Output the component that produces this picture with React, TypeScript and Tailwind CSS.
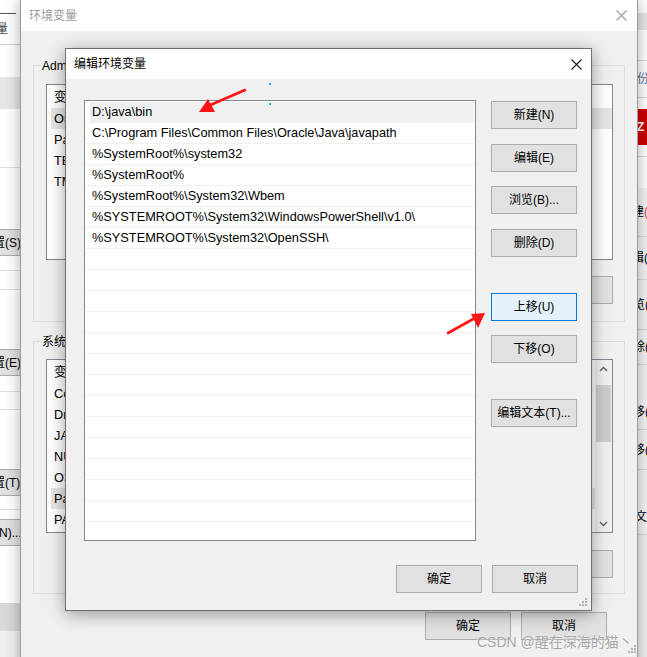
import React from "react";

const FONT = "font-['Liberation_Sans','Noto_Sans_CJK_SC',sans-serif]";

function XIcon({ color }: { color: string }) {
  return (
    <svg width="11" height="11" viewBox="0 0 11 11" className="shrink-0">
      <path d="M0.5 0.5 L10.5 10.5 M10.5 0.5 L0.5 10.5" stroke={color} strokeWidth="1.1" fill="none" />
    </svg>
  );
}

function Btn({ children, focus = false, className = "" }: { children: React.ReactNode; focus?: boolean; className?: string }) {
  return (
    <div
      className={`flex items-center justify-center h-[28px] w-[86px] shrink-0 text-[12px] text-black whitespace-nowrap border ${
        focus ? "bg-[#e5f1fb] border-[#0078d7]" : "bg-[#e1e1e1] border-[#adadad]"
      } ${className}`}
    >
      {children}
    </div>
  );
}

function Grip() {
  return (
    <svg width="10" height="10" viewBox="0 0 10 10" className="absolute right-[3px] bottom-[3px]">
      {[
        [7, 1],
        [4, 4],
        [7, 4],
        [1, 7],
        [4, 7],
        [7, 7],
      ].map(([x, y], i) => (
        <rect key={i} x={x} y={y} width="2" height="2" fill="#b4b4b4" />
      ))}
    </svg>
  );
}

function Chevron({ up }: { up: boolean }) {
  return (
    <svg width="9" height="6" viewBox="0 0 9 6">
      <path d={up ? "M1 5 L4.5 1.5 L8 5" : "M1 1 L4.5 4.5 L8 1"} stroke="#606060" strokeWidth="1.4" fill="none" />
    </svg>
  );
}

function LeftStrip() {
  const line = "h-[1px] shrink-0 bg-[#dedede]";
  const btn = "h-[27px] shrink-0 bg-[#e1e1e1] border-y border-[#adadad] flex items-center";
  return (
    <div className="absolute left-0 top-0 w-[26px] h-full bg-white flex flex-col text-[12px] text-black overflow-hidden">
      <div className="h-[13px] shrink-0" />
      <div className="h-[1px] w-[16px] shrink-0 bg-[#555555]" />
      <div className="h-[30px] shrink-0 flex items-center">
        <span className="-ml-[4px] whitespace-nowrap text-[#444]">量</span>
      </div>
      <div className="h-[1px] shrink-0 bg-[#cfcfcf]" />
      <div className="h-[32px] shrink-0" />
      <div className="h-[32px] shrink-0 bg-[#e6e6e6]" />
      <div className="h-[58px] shrink-0" />
      <div className={line} />
      <div className="h-[61px] shrink-0" />
      <div className={btn}>
        <span className="-ml-[7px] whitespace-nowrap">置(S)...</span>
      </div>
      <div className="h-[14px] shrink-0" />
      <div className={line} />
      <div className="h-[18px] shrink-0" />
      <div className={line} />
      <div className="h-[59px] shrink-0" />
      <div className={btn}>
        <span className="-ml-[7px] whitespace-nowrap">置(E)...</span>
      </div>
      <div className="h-[15px] shrink-0" />
      <div className={line} />
      <div className="h-[17px] shrink-0" />
      <div className={line} />
      <div className="h-[59px] shrink-0" />
      <div className={btn}>
        <span className="-ml-[7px] whitespace-nowrap">置(T)...</span>
      </div>
      <div className="h-[13px] shrink-0" />
      <div className={line} />
      <div className="h-[9px] shrink-0" />
      <div className={btn}>
        <span className="-ml-[1px] whitespace-nowrap">N)...</span>
      </div>
      <div className="h-[57px] shrink-0" />
      <div className="h-[28px] shrink-0 bg-[#d9d9d9]" />
      <div className="flex-1 bg-[#f0f0f0]" />
    </div>
  );
}

function RightStrip() {
  const line = "h-[1px] shrink-0 bg-[#d6d6d6]";
  const row = "shrink-0 flex items-center";
  return (
    <div className="absolute left-[637px] top-0 w-[10px] h-full bg-[#f3f3f3] flex flex-col text-[12px] text-black overflow-hidden">
      <div className="h-[13px] shrink-0 bg-white" />
      <div className="h-[17px] shrink-0 bg-[#e6e6e6]" />
      <div className="h-[30px] shrink-0 bg-white" />
      <div className={line} />
      <div className={`${row} h-[36px] bg-white`}>
        <span className="whitespace-nowrap text-[#50709a]">份</span>
      </div>
      <div className={line} />
      <div className="h-[11px] shrink-0 bg-white" />
      <div className={`${row} h-[36px] bg-[#cc0000]`}>
        <span className="whitespace-nowrap text-white font-bold">Z</span>
      </div>
      <div className="h-[11px] shrink-0 bg-white" />
      <div className={line} />
      <div className="h-[31px] shrink-0 bg-white" />
      <div className={`${row} h-[48px]`}>
        <span className="-ml-[5px] whitespace-nowrap">建<span className="text-[#e03030]">(</span></span>
      </div>
      <div className={line} />
      <div className={`${row} h-[42px]`}>
        <span className="-ml-[5px] whitespace-nowrap">辑(</span>
      </div>
      <div className={line} />
      <div className={`${row} h-[49px]`}>
        <span className="-ml-[4px] whitespace-nowrap">览(B</span>
      </div>
      <div className={line} />
      <div className={`${row} h-[34px]`}>
        <span className="-ml-[4px] whitespace-nowrap">除(</span>
      </div>
      <div className={line} />
      <div className={`${row} h-[64px] items-end pb-[8px]`}>
        <span className="-ml-[4px] whitespace-nowrap">移(</span>
      </div>
      <div className={line} />
      <div className={`${row} h-[39px]`}>
        <span className="-ml-[4px] whitespace-nowrap">移(</span>
      </div>
      <div className={line} />
      <div className={`${row} h-[64px] items-end pb-[8px]`}>
        <span className="-ml-[2px] whitespace-nowrap">文本</span>
      </div>
      <div className={line} />
      <div className="flex-1 bg-[#f0f0f0]" />
    </div>
  );
}

function SmallList({ rows, selected, height, scrollbar }: { rows: string[]; selected: number; height: string; scrollbar?: boolean }) {
  return (
    <div className={`${height} border border-[#828790] bg-white flex overflow-hidden`}>
      <div className="flex-1 flex flex-col text-[12.75px] text-black">
        <div className="h-[23px] shrink-0 flex items-center pl-[7px] gap-[120px] whitespace-nowrap">
          <span>变量</span>
          <span>值</span>
        </div>
        {rows.map((r, i) => (
          <div key={i} className="h-[21px] shrink-0 flex items-stretch">
            <div className={`ml-[4px] flex-1 flex items-center pl-[3px] whitespace-nowrap ${i === selected ? "bg-[#e5e5e5]" : ""}`}>{r}</div>
          </div>
        ))}
      </div>
      {scrollbar && (
        <div className="w-[17px] shrink-0 bg-[#f0f0f0] flex flex-col">
          <div className="h-[17px] flex items-center justify-center">
            <Chevron up />
          </div>
          <div className="mt-[8px] h-[57px] mx-[1px] bg-[#cdcdcd]" />
          <div className="flex-1" />
          <div className="h-[17px] flex items-center justify-center">
            <Chevron up={false} />
          </div>
        </div>
      )}
    </div>
  );
}

function Window1() {
  return (
    <div className="absolute left-[20px] top-0 w-[618px] h-[672px] flex flex-col bg-[#f0f0f0] border-x border-b border-[#9c9c9c] shadow-[0_0_14px_rgba(0,0,0,0.32)]">
      <div className="h-[31px] shrink-0 bg-white flex items-center justify-between pl-[8px] pr-[10px]">
        <span className="text-[12px] text-[#9a9a9a]">环境变量</span>
        <XIcon color="#9a9a9a" />
      </div>
      <div className="flex flex-col px-[12px]">
        <div className="relative mt-[34px] border border-[#dcdcdc] pt-[18px] pb-[17px] pl-[12px] pr-[11px]">
          <span className="absolute left-[7px] -top-[9px] bg-[#f0f0f0] px-[1px] text-[12px] text-black whitespace-nowrap">Administrator 的用户变量</span>
          <SmallList rows={["OneDrive", "Path", "TEMP", "TMP"]} selected={0} height="h-[176px]" />
          <div className="mt-[16px] flex justify-end gap-[10px]">
            <Btn>新建(N)...</Btn>
            <Btn>编辑(E)...</Btn>
            <Btn>删除(D)</Btn>
          </div>
        </div>
        <div className="relative mt-[19px] border border-[#dcdcdc] pt-[17px] pb-[15px] pl-[12px] pr-[11px]">
          <span className="absolute left-[7px] -top-[9px] bg-[#f0f0f0] px-[1px] text-[12px] text-black whitespace-nowrap">系统变量(S)</span>
          <SmallList
            rows={["ComSpec", "DriverData", "JAVA_HOME", "NUMBER_OF_PROCESSORS", "OS", "Path", "PATHEXT"]}
            selected={5}
            height="h-[174px]"
            scrollbar
          />
          <div className="mt-[17px] flex justify-end gap-[10px]">
            <Btn>新建(W)...</Btn>
            <Btn>编辑(I)...</Btn>
            <Btn>删除(L)</Btn>
          </div>
        </div>
        <div className="mt-[18px] flex justify-end gap-[10px] pr-[18px]">
          <Btn>确定</Btn>
          <Btn>取消</Btn>
        </div>
      </div>
    </div>
  );
}

const PATHS = [
  "D:\\java\\bin",
  "C:\\Program Files\\Common Files\\Oracle\\Java\\javapath",
  "%SystemRoot%\\system32",
  "%SystemRoot%",
  "%SystemRoot%\\System32\\Wbem",
  "%SYSTEMROOT%\\System32\\WindowsPowerShell\\v1.0\\",
  "%SYSTEMROOT%\\System32\\OpenSSH\\",
];

function Dialog() {
  const rows = [...PATHS, ...Array(15).fill("")];
  return (
    <div className="absolute left-[65px] top-[48px] w-[527px] h-[563px] flex flex-col bg-[#f0f0f0] border border-[#6f6f6f] shadow-[0_3px_16px_rgba(0,0,0,0.38)]">
      <div className="h-[30px] shrink-0 bg-white flex items-center justify-between pl-[8px] pr-[9px]">
        <span className="text-[12px] text-black">编辑环境变量</span>
        <XIcon color="#1a1a1a" />
      </div>
      <div className="flex pl-[18px] pt-[21px]">
        <div className="w-[392px] h-[441px] border border-[#828790] bg-white overflow-hidden flex flex-col px-[1px] pt-[1px] text-[12.75px] text-black">
          {rows.map((r, i) => (
            <div key={i} className="h-[21px] shrink-0 border-b border-[#f0f0f0] flex items-stretch">
              <div className={`ml-[4px] flex-1 flex items-center pl-[2px] whitespace-nowrap ${i === 0 ? "bg-[#f0f0f0]" : ""}`}>{r}</div>
            </div>
          ))}
        </div>
        <div className="ml-[15px] pt-[1px] flex flex-col">
          <Btn>新建(N)</Btn>
          <Btn className="mt-[15px]">编辑(E)</Btn>
          <Btn className="mt-[14px]">浏览(B)...</Btn>
          <Btn className="mt-[15px]">删除(D)</Btn>
          <Btn focus className="mt-[36px]">上移(U)</Btn>
          <Btn className="mt-[14px]">下移(O)</Btn>
          <Btn className="mt-[36px]">编辑文本(T)...</Btn>
        </div>
      </div>
      <div className="mt-[24px] flex justify-end gap-[10px] pr-[13px]">
        <Btn>确定</Btn>
        <Btn>取消</Btn>
      </div>
      <Grip />
    </div>
  );
}

function Annotations() {
  return (
    <svg width="647" height="657" viewBox="0 0 647 657" className="absolute left-0 top-0 pointer-events-none">
      <line x1="245" y1="90" x2="208" y2="106" stroke="#ff1414" strokeWidth="2.6" strokeLinecap="round" />
      <polygon points="199,112 208,99 215,112" fill="#ff1414" />
      <line x1="448" y1="333" x2="475" y2="318" stroke="#ff1414" strokeWidth="2.6" strokeLinecap="round" />
      <polygon points="485,313 471,314 478,328" fill="#ff1414" />
      <rect x="269" y="83" width="2" height="2" fill="#2aa8ff" />
      <rect x="269" y="103" width="2" height="2" fill="#2aa8ff" />
    </svg>
  );
}

export default function App() {
  return (
    <div className={`relative w-[647px] h-[657px] overflow-hidden bg-[#f0f0f0] ${FONT}`}>
      <LeftStrip />
      <RightStrip />
      <Window1 />
      <Dialog />
      <Annotations />
      <div className="absolute left-[477px] top-[632px] text-[14px] text-[#a6a6a6] whitespace-nowrap [text-shadow:0_0_2px_rgba(255,255,255,0.9)]">
        CSDN @醒在深海的猫丶
      </div>
      <svg width="10" height="10" viewBox="0 0 10 10" className="absolute left-[627px] top-[644px]">
        {[
          [7, 1],
          [4, 4],
          [7, 4],
          [1, 7],
          [4, 7],
          [7, 7],
        ].map(([x, y], i) => (
          <rect key={i} x={x} y={y} width="2" height="2" fill="#b4b4b4" />
        ))}
      </svg>
    </div>
  );
}
